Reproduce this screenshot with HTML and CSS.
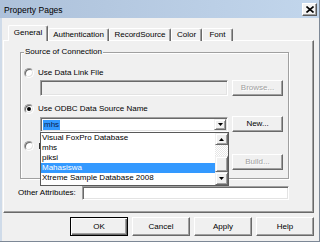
FILE: index.html
```html
<!DOCTYPE html>
<html>
<head>
<meta charset="utf-8">
<title>Property Pages</title>
<link rel="stylesheet" href="styles.css">
</head>
<body>
<div class="window">
  <div class="titlebar">
    <span class="title">Property Pages</span>
    <span class="close"><svg width="8" height="7" viewBox="0 0 8 7"><path d="M0.5 0.5 L7.5 6.5 M7.5 0.5 L0.5 6.5" stroke="#000" stroke-width="1.6" fill="none"/></svg></span>
  </div>
  <div class="client">
    <div class="tabs">
      <div class="tab sel w-gen">General</div>
      <div class="tab w-auth">Authentication</div>
      <div class="tab w-rec">RecordSource</div>
      <div class="tab w-col">Color</div>
      <div class="tab w-font">Font</div>
    </div>
    <div class="panel">
      <div class="group">
        <span class="legend">Source of Connection</span>
        <div class="radio-row r1"><span class="radio"></span><span>Use Data Link File</span></div>
        <div class="field-row f1"><div class="textbox disabled"></div><div class="btn small disabled">Browse...</div></div>
        <div class="radio-row r2"><span class="radio checked"></span><span>Use ODBC Data Source Name</span></div>
        <div class="field-row f2">
          <div class="combo">
            <span class="sel-text">mhs</span>
            <span class="drop"><svg width="5" height="3" viewBox="0 0 5 3"><path d="M0 0 H5 L2.5 3 Z" fill="#000"/></svg></span>
            <div class="listbox">
              <div class="items">
                <div class="item">Visual FoxPro Database</div>
                <div class="item">mhs</div>
                <div class="item">piksi</div>
                <div class="item hl">Mahasiswa</div>
                <div class="item">Xtreme Sample Database 2008</div>
              </div>
              <div class="scrollbar">
                <div class="sbtn up"><svg width="5" height="3" viewBox="0 0 5 3"><path d="M0 3 H5 L2.5 0 Z" fill="#000"/></svg></div>
                <div class="track"></div>
                <div class="thumb"></div>
                <div class="sbtn down"><svg width="5" height="3" viewBox="0 0 5 3"><path d="M0 0 H5 L2.5 3 Z" fill="#000"/></svg></div>
              </div>
            </div>
          </div>
          <div class="btn small">New...</div>
        </div>
        <div class="radio-row r3"><span class="radio"></span><span class="hidden-mark"></span></div>
        <div class="field-row f3"><div class="textbox disabled"></div><div class="btn small disabled">Build...</div></div>
      </div>
      <div class="other">
        <span>Other Attributes:</span>
        <div class="textbox white"></div>
      </div>
    </div>
    <div class="buttons">
      <div class="btn big default">OK</div>
      <div class="btn big">Cancel</div>
      <div class="btn big">Apply</div>
      <div class="btn big">Help</div>
    </div>
  </div>
</div>
</body>
</html>
```
FILE: styles.css
```css
* { box-sizing: border-box; margin: 0; padding: 0; }
html, body { width: 320px; height: 242px; overflow: hidden; }
body {
  background: #f0f0f0;
  font-family: "Liberation Sans", Arial, sans-serif;
  font-size: 8px;
  line-height: 10px;
  color: #000;
}
.window {
  width: 320px;
  height: 242px;
  display: flex;
  flex-direction: column;
  border-right: 1px solid #7d8896;
  border-bottom: 1px solid #7d8896;
}
.titlebar {
  height: 18px;
  flex: none;
  display: flex;
  align-items: center;
  justify-content: space-between;
  padding: 0 2px 0 4px;
  background: linear-gradient(to right, #adc1da, #c2d6ec);
}
.title { font-size: 8.5px; line-height: 10px; padding-top: 1px; }
.close {
  width: 15px;
  height: 13px;
  display: flex;
  align-items: center;
  justify-content: center;
  background: #f4f4f4;
  border: 1px solid;
  border-color: #fff #5a5a5a #5a5a5a #fff;
  box-shadow: inset -1px -1px 0 #a0a0a0;
}
.client {
  flex: 1;
  display: flex;
  flex-direction: column;
  border-left: 2px solid #cfdbe9;
}
/* tabs */
.tabs {
  display: flex;
  align-items: flex-end;
  height: 16px;
  margin: 7px 0 -1px 6px;
  position: relative;
  z-index: 1;
}
.tab {
  height: 13px;
  border: 1px solid;
  border-color: #fff #696969 transparent #fff;
  border-bottom: none;
  border-radius: 2px 2px 0 0;
  box-shadow: inset -1px 0 0 #a0a0a0;
  text-align: center;
  line-height: 11px;
  white-space: nowrap;
}
.tab.sel { height: 16px; background: #f0f0f0; line-height: 13px; }
.w-gen { width: 40px; }
.w-auth { width: 61px; }
.w-rec { width: 62px; }
.w-col { width: 31px; }
.w-font { width: 31px; }
/* panel */
.panel {
  margin-left: 1px;
  width: 311px;
  height: 173px;
  border: 1px solid;
  border-color: #fff #696969 #696969 #fff;
  box-shadow: inset -1px -1px 0 #a0a0a0;
  padding: 11px 0 0 14px;
}
.group {
  margin-left: 2px;
  width: 269px;
  height: 127px;
  border: 1px solid #a0a0a0;
  box-shadow: 1px 1px 0 #fff, inset 1px 1px 0 #fff;
}
.legend {
  display: block;
  width: max-content;
  margin: -6px 0 0 3px;
  padding: 0 1px;
  background: #f0f0f0;
  line-height: 10px;
}
.radio-row {
  display: flex;
  align-items: center;
  gap: 4px;
  height: 10px;
  padding-left: 3px;
  white-space: nowrap;
}
.r1 { margin-top: 11px; }
.r2 { margin-top: 8px; }
.r3 { margin-top: 9px; }
.hidden-mark { width: 1px; height: 6px; margin-left: 1px; background: #333; }
.radio {
  width: 10px;
  height: 10px;
  flex: none;
  border-radius: 50%;
  background: #fff;
  border: 1px solid;
  border-color: #a0a0a0 #fff #fff #a0a0a0;
  box-shadow: inset 1px 1px 0 #696969, inset -1px -1px 0 #e3e3e3;
  display: flex;
  align-items: center;
  justify-content: center;
}
.radio.checked::after {
  content: "";
  width: 4px;
  height: 4px;
  border-radius: 50%;
  background: #000;
}
.field-row {
  display: flex;
  gap: 4px;
  height: 16px;
  padding-left: 19px;
}
.f1 { margin-top: 2px; }
.f2 { margin-top: 2px; }
.f3 { margin-top: 3px; }
.textbox {
  width: 188px;
  height: 16px;
  border: 1px solid;
  border-color: #a0a0a0 #fff #fff #a0a0a0;
  box-shadow: inset 1px 1px 0 #696969, inset -1px -1px 0 #e3e3e3;
}
.textbox.disabled { background: #f0f0f0; }
.textbox.white { background: #fff; }
.btn {
  display: flex;
  align-items: center;
  justify-content: center;
  background: #f0f0f0;
  border: 1px solid;
  border-color: #fff #696969 #696969 #fff;
  box-shadow: inset -1px -1px 0 #a0a0a0;
  white-space: nowrap;
}
.btn.small { width: 51px; height: 16px; }
.btn.disabled { color: #a0a0a0; text-shadow: 1px 1px 0 #fff; }
/* combo */
.combo {
  position: relative;
  width: 188px;
  height: 15px;
  margin-top: 1px;
  background: #fff;
  border: 1px solid;
  border-color: #a0a0a0 #fff #fff #a0a0a0;
  box-shadow: inset 1px 1px 0 #696969, inset -1px -1px 0 #e3e3e3;
  display: flex;
  align-items: center;
  padding-left: 1px;
}
.sel-text {
  background: #3399ff;
  color: #0c1f4f;
  line-height: 10px;
  padding: 0 1px;
  margin-left: 1px;
}
.drop {
  margin: 1px 1px 1px auto;
  width: 12px;
  height: 11px;
  display: flex;
  align-items: center;
  justify-content: center;
  background: #f0f0f0;
  border: 1px solid;
  border-color: #f0f0f0 #696969 #696969 #f0f0f0;
  box-shadow: inset 1px 1px 0 #fff, inset -1px -1px 0 #a0a0a0;
}
.listbox {
  position: absolute;
  top: 14px;
  left: -1px;
  width: 189px;
  height: 54px;
  background: #fff;
  border: 1px solid #5a5a5a;
  display: flex;
  z-index: 2;
}
.items { flex: 1; overflow: hidden; }
.item {
  height: 10px;
  line-height: 10px;
  padding-left: 1px;
  white-space: nowrap;
  overflow: hidden;
}
.item.hl { background: #3399ff; color: #fff; }
.scrollbar {
  width: 13px;
  display: flex;
  flex-direction: column;
}
.sbtn {
  display: flex;
  align-items: center;
  justify-content: center;
  background: #f0f0f0;
  border: 1px solid;
  border-color: #f0f0f0 #696969 #696969 #f0f0f0;
  box-shadow: inset 1px 1px 0 #fff, inset -1px -1px 0 #a0a0a0;
}
.sbtn.up { height: 12px; }
.sbtn.down { height: 13px; }
.track {
  height: 11px;
  background: repeating-conic-gradient(#fff 0 25%, #e6e6e6 0 50%) 0 0 / 2px 2px;
}
.thumb {
  height: 16px;
  background: #f0f0f0;
  border: 1px solid;
  border-color: #f0f0f0 #696969 #696969 #f0f0f0;
  box-shadow: inset 1px 1px 0 #fff, inset -1px -1px 0 #a0a0a0;
}
/* other attributes */
.other {
  display: flex;
  align-items: center;
  width: 271px;
  margin-top: 7px;
  height: 14px;
  white-space: nowrap;
}
.other .textbox { width: 207px; height: 14px; margin-left: auto; }
/* bottom buttons */
.buttons {
  display: flex;
  justify-content: flex-end;
  gap: 4px;
  margin-top: 4px;
  padding-right: 5px;
}
.btn.big { width: 58px; height: 19px; }
.btn.default {
  border: 1px solid #000;
  box-shadow: inset 1px 1px 0 #fff, inset -1px -1px 0 #696969, inset -2px -2px 0 #a0a0a0;
}
```
